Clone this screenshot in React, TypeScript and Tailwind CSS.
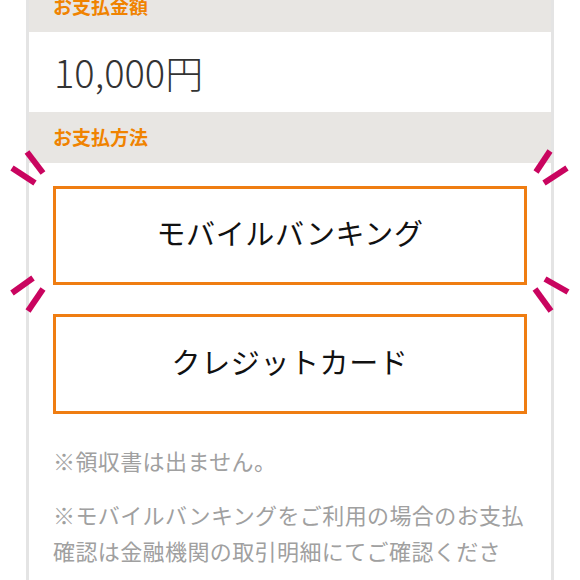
import React from 'react';

const jp = { fontFamily: '"Noto Sans CJK JP", "Noto Sans", sans-serif' };

function Sparkles() {
  // little accent strokes round the first option (button is 475x99, offset 50)
  const lines: [number, number, number, number][] = [
    [9, 32, 32, 47],
    [24, 16, 40, 37],
    [547, 15, 533, 36],
    [564, 32, 541, 47],
    [30, 142, 9, 157],
    [40, 153, 25, 175],
    [542, 143, 565, 156],
    [532, 153, 548, 175],
  ];
  return (
    <svg
      className="absolute left-[-50px] top-[-50px] pointer-events-none overflow-visible"
      width={575}
      height={199}
      viewBox="0 0 575 199"
    >
      {lines.map(([x1, y1, x2, y2], i) => (
        <line key={i} x1={x1} y1={y1} x2={x2} y2={y2} stroke="#c9045f" strokeWidth={6} />
      ))}
    </svg>
  );
}

function SectionHead({ label }: { label: string }) {
  return (
    <div className="h-[51px] bg-[#e8e6e3] flex items-center px-[24px] text-[19px] font-bold text-[#f08300]">
      {label}
    </div>
  );
}

export default function App() {
  return (
    <div className="bg-white min-h-screen overflow-hidden" style={jp}>
      <div className="mx-[26px] -mt-[19px] border-x-[3px] border-[#e4e4e4]">
        <SectionHead label="お支払金額" />
        <div className="h-[80px] flex items-center px-[25px] pb-[2px] text-[38px] font-light text-[#333]">10,000円</div>
        <SectionHead label="お支払方法" />

        <div className="px-[24px] pt-[23px] pb-[40px]">
          <div className="flex flex-col gap-[29px]">
            <div className="relative">
              <button className="w-full h-[99px] pb-[5px] border-[3px] border-[#ef7d12] bg-white text-[29px] tracking-[0.6px] text-[#111]">
                モバイルバンキング
              </button>
              <Sparkles />
            </div>
            <button className="w-full h-[100px] pb-[5px] border-[3px] border-[#ef7d12] bg-white text-[29px] tracking-[0.6px] text-[#111]">
              クレジットカード
            </button>
          </div>

          <div className="mt-[28px] space-y-[18px] text-[22px] leading-[36px] tracking-[0.4px] text-[#a0a0a0]">
            <p>※領収書は出ません。</p>
            <p>※モバイルバンキングをご利用の場合のお支払確認は金融機関の取引明細にてご確認ください。</p>
          </div>
        </div>
      </div>
    </div>
  );
}
